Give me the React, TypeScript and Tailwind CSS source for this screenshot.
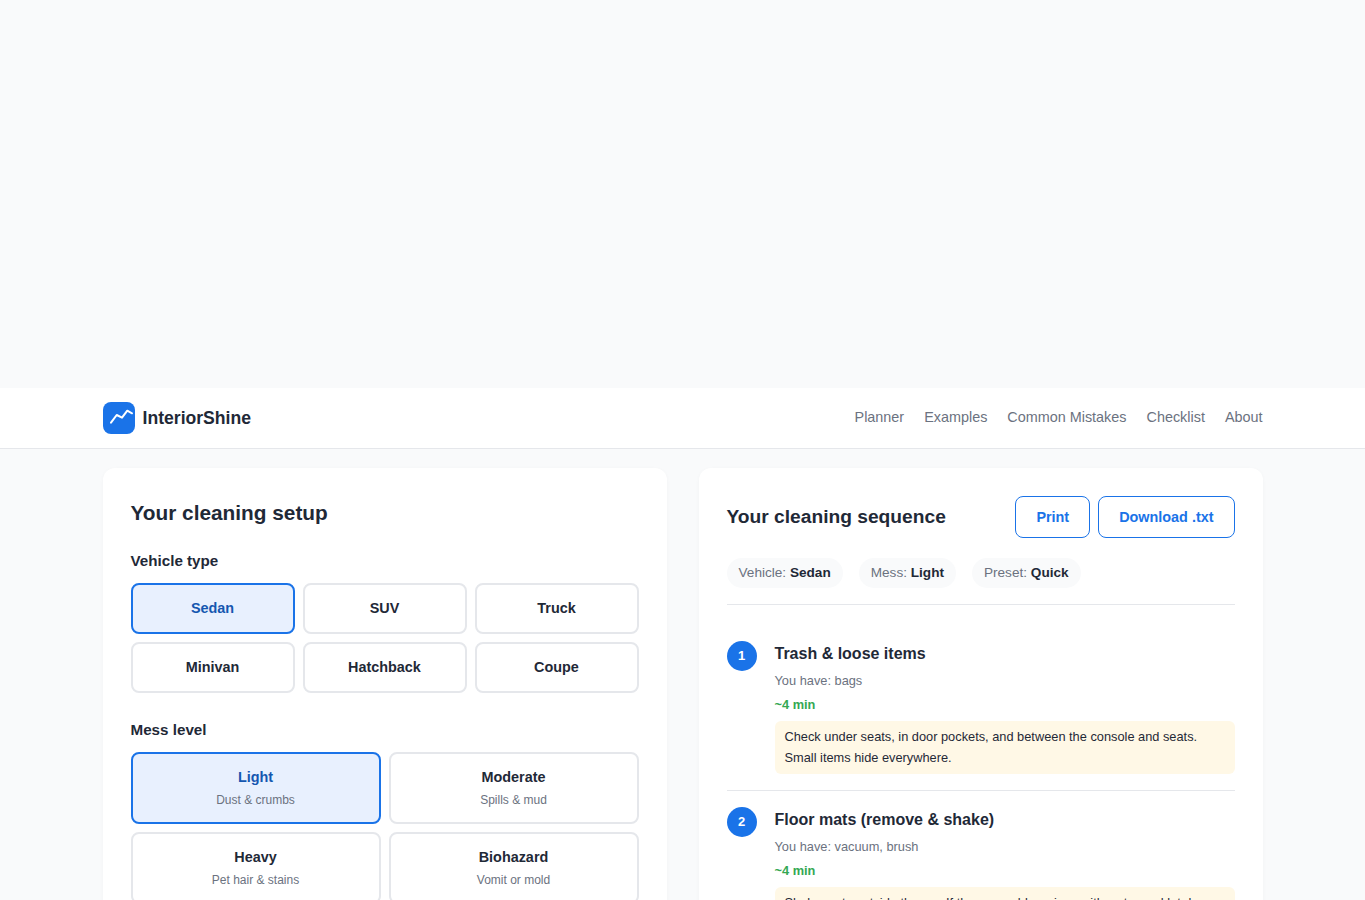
const vehicles = ["Sedan", "SUV", "Truck", "Minivan", "Hatchback", "Coupe"];

const messLevels = [
  { name: "Light", note: "Dust & crumbs" },
  { name: "Moderate", note: "Spills & mud" },
  { name: "Heavy", note: "Pet hair & stains" },
  { name: "Biohazard", note: "Vomit or mold" },
];

const navLinks = ["Planner", "Examples", "Common Mistakes", "Checklist", "About"];

const summary = [
  { label: "Vehicle:", value: "Sedan" },
  { label: "Mess:", value: "Light" },
  { label: "Preset:", value: "Quick" },
];

function Step({ num, title, have, tip }: { num: number; title: string; have: string; tip: string }) {
  return (
    <div className="flex gap-[18px] border-b border-[#e5e7eb] py-4">
      <div className="flex h-[30px] w-[30px] shrink-0 items-center justify-center rounded-full bg-[#1a73e8] pb-px text-[13px] font-bold text-white">
        {num}
      </div>
      <div className="min-w-0 flex-1">
        <h3 className="text-base leading-[1.6] font-bold text-[#1f2937]">{title}</h3>
        <p className="mt-[3.8px] text-[12.8px] leading-[1.6] text-[#6b7280]">{have}</p>
        <p className="mt-[3.7px] text-[12.8px] leading-[1.6] font-bold text-[#34a853]">~4 min</p>
        <div className="mt-[6px] rounded-md bg-[#fff8e6] px-2.5 py-1.5 text-[12.8px] leading-[1.6] text-[#1f2937]">{tip}</div>
      </div>
    </div>
  );
}

export default function App() {
  return (
    <div className="h-screen overflow-hidden bg-[#f9fafb] font-['Liberation_Sans',Arial,sans-serif] text-[#1f2937]">
      <div className="h-[388px]"></div>

      <header className="border-b border-[#e5e7eb] bg-white">
        <div className="mx-auto flex h-[60px] max-w-[1160px] items-center justify-between">
          <div className="flex items-center gap-2">
            <div className="h-8 w-8 rounded-lg bg-[#1a73e8]">
              <svg viewBox="0 0 32 32" className="h-8 w-8" fill="none" stroke="white" strokeWidth="2" strokeLinecap="round" strokeLinejoin="round">
                <path d="M8 20.6 L13.7 13 L19 15.7 L24.3 8.7 L29 11.3" />
              </svg>
            </div>
            <span className="text-[17.6px] font-bold">InteriorShine</span>
          </div>
          <nav className="flex gap-5 text-[14.4px] text-[#6b7280]">
            {navLinks.map((link) => (
              <a key={link} href="#">{link}</a>
            ))}
          </nav>
        </div>
      </header>

      <main className="mx-auto mt-[19px] grid max-w-[1160px] grid-cols-2 gap-8">
        <section className="rounded-xl bg-white p-7 shadow-[0_1px_4px_rgba(0,0,0,0.03)]">
          <h2 className="mb-5 text-[20.8px] leading-[1.6] font-bold">Your cleaning setup</h2>

          <h3 className="mb-[9.4px] text-[15.2px] leading-[1.6] font-bold">Vehicle type</h3>
          <div className="mb-[24.6px] grid grid-cols-3 gap-2">
            {vehicles.map((v) => (
              <button
                key={v}
                className={
                  v === "Sedan"
                    ? "rounded-lg border-2 border-[#1a73e8] bg-[#e8f0fe] py-3 text-[14.4px] leading-[1.6] font-bold text-[#1557b0]"
                    : "rounded-lg border-2 border-[#e5e7eb] bg-white py-3 text-[14.4px] leading-[1.6] font-bold text-[#1f2937]"
                }
              >
                {v}
              </button>
            ))}
          </div>

          <h3 className="mb-2.5 text-[15.2px] leading-[1.6] font-bold">Mess level</h3>
          <div className="grid grid-cols-2 gap-2">
            {messLevels.map((m) => (
              <button
                key={m.name}
                className={
                  m.name === "Light"
                    ? "rounded-lg border-2 border-[#1a73e8] bg-[#e8f0fe] py-3 text-center"
                    : "rounded-lg border-2 border-[#e5e7eb] bg-white py-3 text-center"
                }
              >
                <div className={m.name === "Light" ? "text-[14.4px] leading-[1.6] font-bold text-[#1557b0]" : "text-[14.4px] leading-[1.6] font-bold text-[#1f2937]"}>
                  {m.name}
                </div>
                <div className="mt-0.5 text-xs leading-[1.6] text-[#6b7280]">{m.note}</div>
              </button>
            ))}
          </div>
        </section>

        <section className="rounded-xl bg-white p-7 shadow-[0_1px_4px_rgba(0,0,0,0.03)]">
          <div className="mb-5 flex items-center justify-between">
            <h2 className="pt-px text-[19.2px] font-bold">Your cleaning sequence</h2>
            <div className="flex gap-2">
              <button className="h-[42px] rounded-lg border border-[#1a73e8] px-5 pt-px text-[14.4px] font-bold text-[#1a73e8]">Print</button>
              <button className="h-[42px] rounded-lg border border-[#1a73e8] px-5 pt-px text-[14.4px] font-bold text-[#1a73e8]">Download .txt</button>
            </div>
          </div>

          <div className="mb-[20.5px] flex gap-4 border-b border-[#e5e7eb] pb-4">
            {summary.map((s) => (
              <div key={s.label} className="rounded-2xl bg-[#f9fafb] px-3 py-1 text-[13.6px] leading-[1.6] text-[#6b7280]">
                {s.label} <strong className="font-bold text-[#1f2937]">{s.value}</strong>
              </div>
            ))}
          </div>

          <Step
            num={1}
            title="Trash & loose items"
            have="You have: bags"
            tip="Check under seats, in door pockets, and between the console and seats. Small items hide everywhere."
          />
          <Step
            num={2}
            title="Floor mats (remove & shake)"
            have="You have: vacuum, brush"
            tip="Shake mats outside the car. If they are rubber, rinse with water and let dry before putting them back in."
          />
        </section>
      </main>
    </div>
  );
}
